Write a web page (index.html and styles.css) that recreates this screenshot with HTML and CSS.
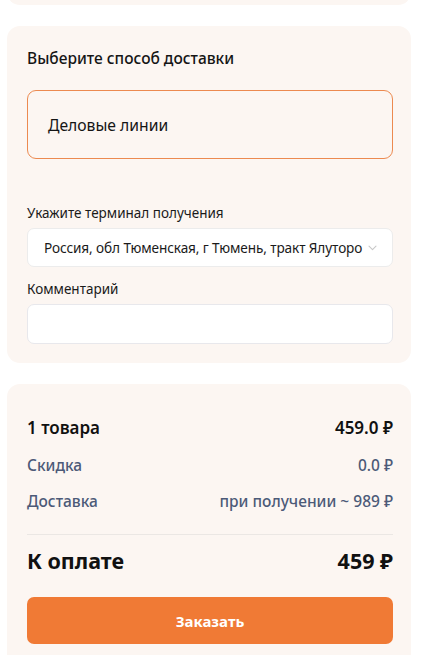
FILE: index.html
```html
<!DOCTYPE html>
<html lang="ru">
<head>
<meta charset="utf-8">
<link rel="stylesheet" href="styles.css">
</head>
<body>
<div class="page">
  <div class="card card-top"></div>

  <div class="card delivery">
    <h2 class="title">Выберите способ доставки</h2>
    <div class="option">Деловые линии</div>

    <label class="label label-terminal">Укажите терминал получения</label>
    <div class="select">
      <span class="select-text">Россия, обл Тюменская, г Тюмень, тракт Ялуторо</span>
      <svg class="chev" width="9" height="6" viewBox="0 0 9 6"><path d="M1 1.2l3.5 3.5 3.5-3.5" fill="none" stroke="#c8c8c8" stroke-width="1.1" stroke-linecap="round" stroke-linejoin="round"/></svg>
    </div>

    <label class="label label-comment">Комментарий</label>
    <div class="input"></div>
  </div>

  <div class="card summary">
    <div class="row row-main"><span>1 товара</span><span>459.0 ₽</span></div>
    <div class="row row-sub"><span>Скидка</span><span>0.0 ₽</span></div>
    <div class="row row-sub row-sub2"><span>Доставка</span><span>при получении ~ 989 ₽</span></div>
    <div class="divider"></div>
    <div class="row row-total"><span>К оплате</span><span>459 ₽</span></div>
    <button class="btn">Заказать</button>
  </div>
</div>
</body>
</html>
```

FILE: styles.css
```css
* { box-sizing: border-box; }
html, body { margin: 0; padding: 0; background: #ffffff; }
body {
  font-family: "Noto Sans", "Open Sans", sans-serif;
  color: #151515;
  overflow: hidden;
  height: 655px;
}
.page {
  width: 404px;
  margin-left: 7px;
  margin-top: -30px;
  display: flex;
  flex-direction: column;
  gap: 21px;
}
.card {
  background: #fcf6f2;
  border-radius: 13px;
  padding: 0 18px 0 20px;
}
.card-top { height: 35px; }
.delivery {
  height: 337px;
  padding-top: 22px;
  display: flex;
  flex-direction: column;
}
.title {
  margin: 0;
  font-size: 15.5px;
  font-weight: 500;
  line-height: 20px;
}
.option {
  margin-top: 22px;
  height: 69px;
  border: 1px solid #ec8a50;
  border-radius: 9px;
  display: flex;
  align-items: center;
  padding-left: 20px;
  font-size: 15.7px;
}
.label {
  font-size: 13.5px;
  line-height: 18px;
  color: #1a1a1a;
}
.label-terminal { margin-top: 45px; }
.label-comment { margin-top: 13px; }
.select {
  margin-top: 6px;
  height: 39px;
  background: #ffffff;
  border: 1px solid #ececec;
  border-radius: 7px;
  display: flex;
  align-items: center;
  padding: 0 13px 0 16px;
  gap: 6px;
}
.select-text {
  white-space: nowrap;
  font-size: 13.6px;
  letter-spacing: -0.1px;
  color: #1a1a1a;
}
.chev { flex: none; margin-top: 1px; }
.input {
  margin-top: 6px;
  height: 40px;
  background: #ffffff;
  border: 1px solid #e8e8ec;
  border-radius: 7px;
}
.summary {
  height: 300px;
  padding-top: 32px;
  display: flex;
  flex-direction: column;
}
.row {
  display: flex;
  justify-content: space-between;
  align-items: center;
}
.row-main {
  font-size: 17px;
  font-weight: 600;
  line-height: 24px;
  color: #111;
}
.row-sub {
  font-size: 15.5px;
  font-weight: 500;
  line-height: 20px;
  color: #4c5a78;
  margin-top: 15px;
}
.row-sub2 { margin-top: 16px; }
.divider {
  margin-top: 23px;
  height: 1px;
  background: #ebe7e4;
}
.row-total {
  margin-top: 12px;
  font-size: 21.5px;
  font-weight: 700;
  line-height: 28px;
  color: #111;
}
.btn {
  margin-top: 22px;
  height: 47px;
  border: none;
  border-radius: 7px;
  background: #f07a35;
  color: #fff;
  font-family: inherit;
  font-size: 15px;
  font-weight: 700;
}
```
